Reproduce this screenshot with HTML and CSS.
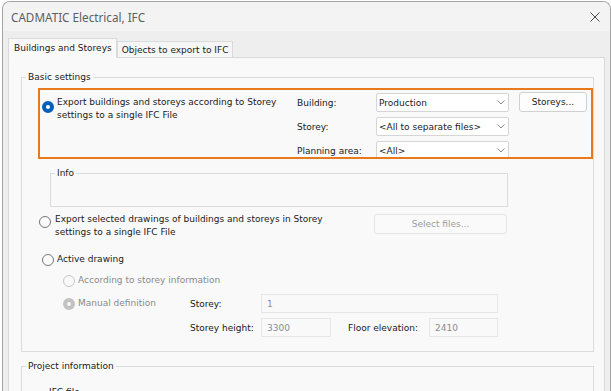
FILE: index.html
```html
<!DOCTYPE html>
<html lang="en">
<head>
    <meta charset="UTF-8">
    <title>CADMATIC Electrical, IFC</title>
    <link rel="stylesheet" href="styles.css">
</head>
<body>
    <div class="window">
        <div class="titlebar">
            <span class="title">CADMATIC Electrical, IFC</span>
            <svg class="close" width="10" height="10" viewBox="0 0 10 10"><path d="M0.5 0.5L9.5 9.5M9.5 0.5L0.5 9.5" stroke="#4a4a4a" stroke-width="1" fill="none"/></svg>
        </div>
        <div class="content">
            <div class="tabs">
                <div class="tab active">Buildings and Storeys</div>
                <div class="tab">Objects to export to IFC</div>
            </div>
            <div class="panel">
                <fieldset class="group basic">
                    <legend>Basic settings</legend>

                    <!-- highlighted option -->
                    <div class="highlight">
                        <div class="option two-line">
                            <span class="radio checked"></span>
                            <span>Export buildings and storeys according to Storey<br>settings to a single IFC File</span>
                        </div>
                        <div class="selectors">
                            <span>Building:</span>
                            <div class="combo"><span>Production</span><svg width="8" height="5" viewBox="0 0 8 5"><path d="M0.5 0.5L4 4L7.5 0.5" stroke="#8a8a8a" fill="none"/></svg></div>
                            <button class="btn storeys">Storeys...</button>
                            <span>Storey:</span>
                            <div class="combo"><span>&lt;All to separate files&gt;</span><svg width="8" height="5" viewBox="0 0 8 5"><path d="M0.5 0.5L4 4L7.5 0.5" stroke="#8a8a8a" fill="none"/></svg></div>
                            <span></span>
                            <span>Planning area:</span>
                            <div class="combo"><span>&lt;All&gt;</span><svg width="8" height="5" viewBox="0 0 8 5"><path d="M0.5 0.5L4 4L7.5 0.5" stroke="#8a8a8a" fill="none"/></svg></div>
                        </div>
                    </div>

                    <fieldset class="group info">
                        <legend>Info</legend>
                    </fieldset>

                    <div class="files">
                        <div class="option two-line">
                            <span class="radio"></span>
                            <span>Export selected drawings of buildings and storeys in Storey<br>settings to a single IFC File</span>
                        </div>
                        <button class="btn disabled">Select files...</button>
                    </div>

                    <div class="option active-row">
                        <span class="radio"></span>
                        <span>Active drawing</span>
                    </div>

                    <div class="option sub">
                        <span class="radio disabled"></span>
                        <span>According to storey information</span>
                    </div>

                    <div class="manual">
                        <div class="option muted">
                            <span class="radio disabled-checked"></span>
                            <span>Manual definition</span>
                        </div>
                        <span>Storey:</span>
                        <div class="field wide">1</div>
                        <span></span>
                        <span>Storey height:</span>
                        <div class="field">3300</div>
                        <span class="label2">Floor elevation:</span>
                        <div class="field">2410</div>
                    </div>
                </fieldset>

                <fieldset class="group project">
                    <legend>Project information</legend>
                    <div class="ifc-row">IFC file</div>
                </fieldset>
            </div>
        </div>
    </div>
</body>
</html>
```

FILE: styles.css
```css
* {
    box-sizing: border-box;
}
body {
    margin: 0;
    background: #fff;
    font-family: "DejaVu Sans", sans-serif;
    font-size: 9px;
    color: #1a1a1a;
    overflow: hidden;
}
.window {
    margin: 1px 0 0 2px;
    width: 609px;
    height: 400px;
    border: 1px solid #a3a3a3;
    border-bottom: none;
    border-radius: 8px 8px 0 0;
    overflow: hidden;
    background: #eeeeee;
    display: flex;
    flex-direction: column;
}
.titlebar {
    height: 29px;
    flex: none;
    background: #f3f3f3;
    display: flex;
    align-items: center;
    justify-content: space-between;
    padding: 0 10px 0 8px;
}
.title {
    font-family: "Noto Sans", sans-serif;
    font-size: 11.7px;
    color: #5e5e5e;
}
.content {
    flex: 1;
    display: flex;
    flex-direction: column;
    padding: 0 5px;
}
.tabs {
    height: 26px;
    flex: none;
    display: flex;
    align-items: flex-end;
}
.tab {
    height: 16px;
    display: flex;
    align-items: center;
    padding: 0 4px;
    border: 1px solid #dadada;
    border-bottom: none;
    background: #f6f6f6;
}
.tab.active {
    height: 20px;
    margin-bottom: -1px;
    padding: 0 4px 2px 5px;
    background: #f9f9f9;
    position: relative;
    z-index: 1;
}
.panel {
    flex: 1;
    background: #f9f9f9;
    border: 1px solid #d9d9d9;
    padding: 0 10px 0 12px;
}
.group {
    border: 1px solid #dcdcdc;
    margin: 0;
    padding: 0;
    min-width: 0;
}
.group legend {
    margin-left: 4px;
    padding: 0 2px;
    line-height: 13px;
}
.basic {
    margin-top: 13px;
    padding-bottom: 14px;
}
.option {
    display: flex;
    align-items: center;
    gap: 3px;
    line-height: 13px;
}
.radio {
    width: 12px;
    height: 12px;
    flex: none;
    border-radius: 50%;
    border: 1px solid #767676;
    background: #fbfbfb;
}
.radio.checked {
    border: 4px solid #005fb8;
    background: #fff;
}
.radio.disabled {
    border-color: #c6c6c6;
    background: #f9f9f9;
}
.radio.disabled-checked {
    border: 4px solid #c2c2c2;
    background: #f3f3f3;
}
.option.two-line {
    align-items: flex-start;
}
.highlight {
    margin: 4px 0 0 16px;
    height: 71px;
    border: 2px solid #e8791c;
    display: flex;
    justify-content: space-between;
    overflow: hidden;
    padding: 0 4px 0 2px;
}
.highlight .option {
    margin-top: 6px;
}
.highlight .radio {
    margin-top: 5px;
}
.selectors {
    display: grid;
    grid-template-columns: 69px 133px 68px;
    grid-auto-rows: 19px;
    column-gap: 10px;
    row-gap: 5px;
    align-items: center;
    padding-top: 3px;
}
.combo {
    height: 19px;
    background: #fff;
    border: 1px solid #d5d5d5;
    border-radius: 2px;
    display: flex;
    align-items: center;
    justify-content: space-between;
    padding: 0 3px 0 2px;
}
.btn {
    height: 20px;
    background: #fdfdfd;
    border: 1px solid #d0d0d0;
    border-radius: 3px;
    font: inherit;
    color: inherit;
    padding: 0;
    display: flex;
    align-items: center;
    justify-content: center;
}
.btn.storeys {
    margin-top: -1px;
}
.btn.disabled {
    margin-top: 1px;
    color: #9c9c9c;
    border-color: #e4e4e4;
    background: #fafafa;
}
.info {
    margin: 8px 0 0 28px;
    width: 458px;
    height: 40px;
}
.files {
    display: grid;
    grid-template-columns: 335px 133px;
    align-items: start;
    margin: 6px 0 0 17px;
}
.files .option {
    gap: 4px;
}
.files .radio {
    margin-top: 3px;
}
.active-row {
    margin: 14px 0 0 20px;
}
.sub {
    margin: 8px 0 0 41px;
    color: #8a8a8a;
}
.muted {
    color: #8a8a8a;
}
.manual {
    display: grid;
    grid-template-columns: 127px 71px 70px 98px 69px;
    grid-auto-rows: 19px;
    row-gap: 5px;
    align-items: center;
    margin: 7px 0 0 41px;
}
.field {
    height: 19px;
    border: 1px solid #e6e6e6;
    background: #f9f9f9;
    color: #8c8c8c;
    padding-left: 5px;
    display: flex;
    align-items: center;
}
.field.wide {
    grid-column: 3 / 6;
}
.label2 {
    padding-left: 17px;
}
.project {
    margin-top: 8px;
    height: 60px;
}
.ifc-row {
    margin: 13px 0 0 27px;
    line-height: 13px;
}
```
